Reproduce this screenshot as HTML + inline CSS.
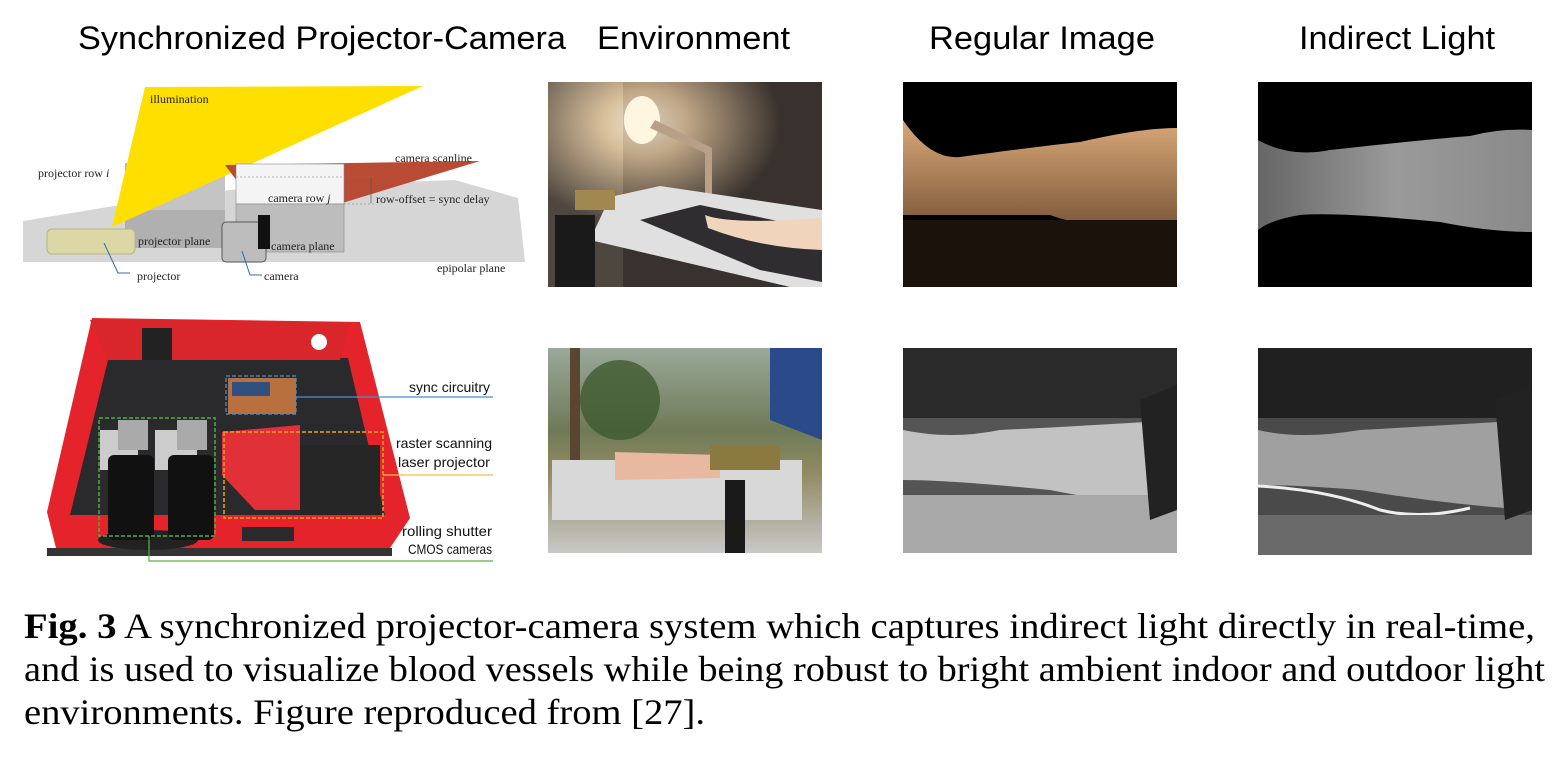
<!DOCTYPE html>
<html><head><meta charset="utf-8"><style>
html,body{margin:0;padding:0;background:#fff;width:1562px;height:759px;overflow:hidden}
svg{display:block}
.h{font-family:"Liberation Sans",sans-serif;font-size:32px;fill:#000}
.s{font-family:"Liberation Serif",serif;font-size:12px;fill:#222}
.l{font-family:"Liberation Sans",sans-serif;font-size:14px;fill:#111}
.c{font-family:"Liberation Serif",serif;font-size:36px;fill:#000}
</style></head><body>
<svg width="1562" height="759" viewBox="0 0 1562 759" xmlns="http://www.w3.org/2000/svg">
<defs>
<radialGradient id="lamp" cx="0.35" cy="0.2" r="0.5"><stop offset="0" stop-color="#fff8e8"/><stop offset="0.3" stop-color="#e8c9a0"/><stop offset="1" stop-color="#3a332e"/></radialGradient>
<linearGradient id="skin" x1="0" y1="0" x2="0" y2="1"><stop offset="0" stop-color="#d9a878"/><stop offset="1" stop-color="#7a5538"/></linearGradient>
<linearGradient id="ir" x1="0" y1="0" x2="1" y2="0"><stop offset="0" stop-color="#666"/><stop offset="0.5" stop-color="#9a9a9a"/><stop offset="1" stop-color="#8a8a8a"/></linearGradient>
<linearGradient id="sky" x1="0" y1="0" x2="0" y2="1"><stop offset="0" stop-color="#9aa89a"/><stop offset="0.4" stop-color="#6f7a58"/><stop offset="0.6" stop-color="#8f8a60"/><stop offset="1" stop-color="#c8c8c8"/></linearGradient>
</defs>
<text class="h" x="78" y="49" textLength="488" lengthAdjust="spacingAndGlyphs">Synchronized Projector-Camera</text>
<text class="h" x="597" y="49" textLength="193" lengthAdjust="spacingAndGlyphs">Environment</text>
<text class="h" x="929" y="49" textLength="226" lengthAdjust="spacingAndGlyphs">Regular Image</text>
<text class="h" x="1299" y="49" textLength="196" lengthAdjust="spacingAndGlyphs">Indirect Light</text>

<!-- top-left diagram -->
<polygon points="23,221 120,205 230,190 300,186 455,180 518,198 525,262 23,262" fill="#d6d6d6"/>
<rect x="125" y="163" width="100" height="85" fill="#c4c4c4"/>
<rect x="125" y="163" width="100" height="10" fill="#b5b5b5"/>
<rect x="125" y="210" width="100" height="38" fill="#b0b0b0"/>
<polygon points="145,87 423,86 112,227" fill="#ffdf00"/>
<polygon points="225,165 480,161 270,225" fill="#b94a34"/>
<rect x="236" y="164" width="108" height="40" fill="#f4f4f4" stroke="#888" stroke-width="0.6"/>
<rect x="236" y="204" width="108" height="48" fill="#bdbdbd" stroke="#888" stroke-width="0.6"/>
<line x1="236" y1="177" x2="375" y2="177" stroke="#777" stroke-dasharray="2,2" stroke-width="0.6"/>
<line x1="344" y1="204" x2="375" y2="204" stroke="#777" stroke-dasharray="2,2" stroke-width="0.6"/>
<line x1="371" y1="178" x2="371" y2="203" stroke="#555" stroke-width="0.7"/>
<rect x="47" y="229" width="88" height="25" rx="5" fill="#dcd8a6" stroke="#b8b480"/>
<rect x="222" y="222" width="44" height="40" rx="4" fill="#bdbdbd" stroke="#555"/>
<rect x="258" y="215" width="12" height="34" fill="#111"/>
<polyline points="104,243 118,273 130,273" fill="none" stroke="#2b6cb0"/>
<polyline points="242,251 250,275 262,275" fill="none" stroke="#2b6cb0"/>
<text class="s" x="150" y="103">illumination</text>
<text class="s" x="38" y="177">projector row <tspan font-style="italic">i</tspan></text>
<text class="s" x="395" y="162">camera scanline</text>
<text class="s" x="268" y="202">camera row <tspan font-style="italic">j</tspan></text>
<text class="s" x="376" y="203">row-offset = sync delay</text>
<text class="s" x="138" y="245">projector plane</text>
<text class="s" x="271" y="250">camera plane</text>
<text class="s" x="137" y="280">projector</text>
<text class="s" x="264" y="280">camera</text>
<text class="s" x="437" y="272">epipolar plane</text>

<!-- bottom-left red box -->
<polygon points="92,318 360,322 410,518 390,548 56,548 47,512" fill="#e4242a"/>
<polygon points="108,360 348,358 385,515 70,515" fill="#2a2a2c"/>
<polygon points="90,320 350,322 340,360 108,360" fill="#d8262a"/>
<rect x="47" y="548" width="345" height="8" fill="#333"/>
<ellipse cx="148" cy="540" rx="50" ry="10" fill="#222"/>
<rect x="242" y="527" width="52" height="14" fill="#2a2a2a"/>
<circle cx="319" cy="342" r="8" fill="#fff"/>
<rect x="142" y="328" width="30" height="32" fill="#222"/>
<rect x="100" y="430" width="38" height="40" fill="#ccc"/>
<rect x="155" y="430" width="42" height="40" fill="#ccc"/>
<rect x="118" y="420" width="30" height="30" fill="#aaa"/>
<rect x="177" y="420" width="30" height="30" fill="#aaa"/>
<rect x="108" y="455" width="46" height="85" rx="6" fill="#111"/>
<rect x="168" y="455" width="46" height="85" rx="6" fill="#111"/>
<polygon points="222,432 300,425 300,510 255,510 222,475" fill="#e13038"/>
<rect x="300" y="445" width="80" height="70" fill="#262626"/>
<rect x="228" y="378" width="68" height="36" fill="#b8703e"/>
<rect x="232" y="382" width="38" height="14" fill="#305080"/>
<rect x="226" y="376" width="70" height="38" fill="none" stroke="#4a8fd0" stroke-width="1.3" stroke-dasharray="4,2"/>
<rect x="224" y="432" width="159" height="86" fill="none" stroke="#f0a020" stroke-width="1.5" stroke-dasharray="4,2"/>
<rect x="99" y="418" width="116" height="118" fill="none" stroke="#4caf40" stroke-width="1.5" stroke-dasharray="4,2"/>
<line x1="296" y1="397" x2="493" y2="397" stroke="#4a8fd0" stroke-width="1.2"/>
<line x1="383" y1="475" x2="493" y2="475" stroke="#f0c040" stroke-width="1.2"/>
<polyline points="149,536 149,561 493,561" fill="none" stroke="#5bb040" stroke-width="1.2"/>
<text class="l" x="409" y="392" textLength="81" lengthAdjust="spacingAndGlyphs">sync circuitry</text>
<text class="l" x="396" y="448" textLength="96" lengthAdjust="spacingAndGlyphs">raster scanning</text>
<text class="l" x="398" y="467" textLength="92" lengthAdjust="spacingAndGlyphs">laser projector</text>
<text class="l" x="402" y="536" textLength="90" lengthAdjust="spacingAndGlyphs">rolling shutter</text>
<text class="l" x="408" y="554" textLength="84" lengthAdjust="spacingAndGlyphs">CMOS cameras</text>

<!-- Environment top -->
<rect x="548" y="82" width="274" height="205" fill="#2e2a2a"/>
<rect x="548" y="82" width="75" height="205" fill="#9c9888"/>
<rect x="548" y="82" width="274" height="205" fill="url(#lamp)" opacity="0.8"/>
<ellipse cx="642" cy="120" rx="18" ry="24" fill="#fff6e0"/>
<polygon points="655,120 712,148 712,200 705,200 705,153 650,128" fill="#b8a088"/>
<ellipse cx="708" cy="204" rx="24" ry="6" fill="#a89070"/>
<polygon points="610,197 660,186 822,210 822,287 790,287 590,240" fill="#e0e0e0"/>
<polygon points="640,220 700,205 822,230 822,282 760,270" fill="#2f2d30"/>
<path d="M705,215 Q730,225 822,218 L822,250 Q760,248 708,228 Z" fill="#f0d4bc"/>
<rect x="575" y="190" width="40" height="20" fill="#a08850"/>
<rect x="555" y="215" width="40" height="72" fill="#1a1a1a"/>

<!-- Regular top -->
<rect x="903" y="82" width="274" height="205" fill="#000"/>
<path d="M903,120 Q930,160 960,157 Q1050,145 1080,142 Q1140,128 1177,128 L1177,231 Q1090,230 1050,215 L903,215 Z" fill="url(#skin)"/>
<rect x="903" y="220" width="274" height="67" fill="#1b120c"/>

<!-- Indirect top -->
<rect x="1258" y="82" width="274" height="205" fill="#000"/>
<path d="M1258,140 Q1290,158 1330,150 Q1420,140 1470,136 Q1500,128 1532,130 L1532,232 Q1490,232 1440,222 Q1340,212 1300,215 Q1270,220 1258,230 Z" fill="url(#ir)"/>

<!-- Environment bottom -->
<rect x="548" y="348" width="274" height="205" fill="url(#sky)"/>
<rect x="570" y="348" width="10" height="120" fill="#5a4630"/>
<ellipse cx="620" cy="400" rx="40" ry="40" fill="#3e5a30" opacity="0.8"/>
<path d="M770,348 L822,348 L822,440 L770,420 Z" fill="#2a4a8a"/>
<rect x="552" y="460" width="250" height="60" fill="#d8d8d8"/>
<path d="M615,452 L720,455 L720,478 L615,480 Z" fill="#e8b8a0"/>
<rect x="710" y="445" width="70" height="25" fill="#8a7a40"/>
<rect x="725" y="480" width="20" height="73" fill="#1a1a1a"/>

<!-- Regular bottom -->
<rect x="903" y="348" width="274" height="205" fill="#555"/>
<rect x="903" y="348" width="274" height="70" fill="#2a2a2a"/>
<path d="M903,430 Q950,440 1000,430 Q1100,425 1177,420 L1177,510 Q1100,500 1050,490 Q950,480 903,480 Z" fill="#c2c2c2"/>
<rect x="903" y="495" width="274" height="58" fill="#a8a8a8"/>
<path d="M1140,400 L1177,385 L1177,510 L1150,520 Z" fill="#222"/>

<!-- Indirect bottom -->
<rect x="1258" y="348" width="274" height="207" fill="#4a4a4a"/>
<rect x="1258" y="348" width="274" height="70" fill="#202020"/>
<path d="M1258,430 Q1300,440 1360,430 Q1450,425 1532,420 L1532,510 Q1450,505 1360,490 Q1300,485 1258,485 Z" fill="#a0a0a0"/>
<path d="M1258,486 Q1330,490 1380,510 Q1420,520 1470,508" fill="none" stroke="#eee" stroke-width="3"/>
<rect x="1258" y="515" width="274" height="40" fill="#6a6a6a"/>
<path d="M1495,400 L1532,385 L1532,510 L1505,520 Z" fill="#222"/>

<!-- caption -->
<text class="c" x="24" y="638" textLength="1511" lengthAdjust="spacingAndGlyphs"><tspan font-weight="bold">Fig. 3</tspan>  A synchronized projector-camera system which captures indirect light directly in real-time,</text>
<text class="c" x="24" y="681" textLength="1521" lengthAdjust="spacingAndGlyphs">and is used to visualize blood vessels while being robust to bright ambient indoor and outdoor light</text>
<text class="c" x="24" y="724" textLength="681" lengthAdjust="spacingAndGlyphs">environments. Figure reproduced from [27].</text>
</svg>
</body></html>
